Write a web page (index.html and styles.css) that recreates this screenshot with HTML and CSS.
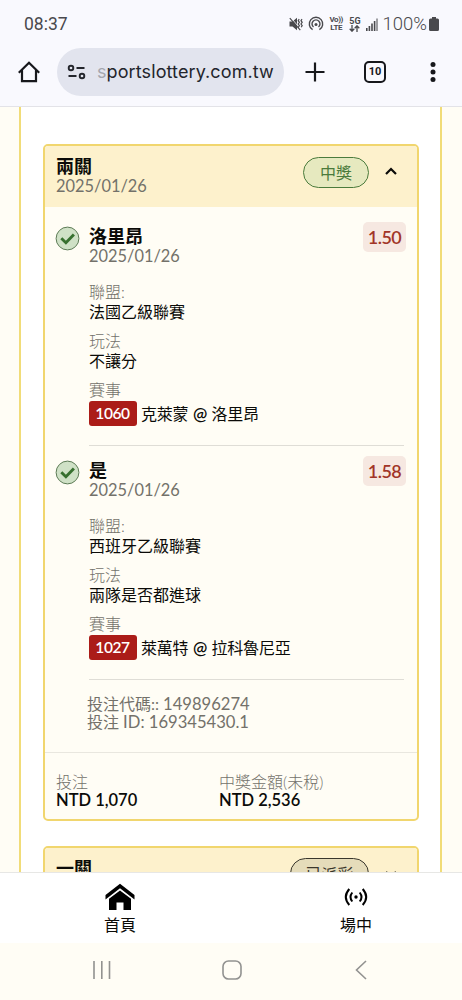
FILE: index.html
```html
<!DOCTYPE html>
<html lang="zh-Hant">
<head>
<meta charset="utf-8">
<meta name="viewport" content="width=device-width, initial-scale=1">
<title>投注紀錄</title>
<link rel="stylesheet" href="styles.css">
</head>
<body>
<header class="chrome">
  <div class="status">
    <span class="clock">08:37</span>
    <div class="indicators">
      <svg class="i-mute" width="14" height="14" viewBox="0 0 14 14"><path d="M.5 4.500h3L8 .8v12.400L3.500 9.500h-3z" fill="#49494d"/><path d="M1.800.8l10.500 12" stroke="#f9f9fe" stroke-width="1"/><path d="M.8 1.200l10.500 12M10.200 2.200l-1 1.500 1.200 1.600-1.200 1.700 1.200 1.600-1 1.600M13 2.200l-1 1.500 1.200 1.600L12 7l1.200 1.600-1 1.600" stroke="#49494d" stroke-width="1.200" fill="none"/></svg>
      <svg class="i-hot" width="16" height="16" viewBox="0 0 16 16" fill="none" stroke="#49494d" stroke-width="1.400"><path d="M4.600 13.700a6.700 6.700 0 1 1 6.800 0M5.500 11a4 4 0 1 1 5 0"/><circle cx="8" cy="8.500" r="1.500" fill="#49494d" stroke="none"/></svg>
      <div class="tiny volte"><span>Vo))</span><span>LTE</span></div>
      <div class="tiny fiveg"><span>5G</span><svg width="11" height="7" viewBox="0 0 11 7" fill="none" stroke="#49494d" stroke-width="1.300"><path d="M3 0v6M.7 3.800L3 6.200l2.300-2.400M8 7V1M5.700 3.200L8 .8l2.300 2.400"/></svg></div>
      <svg class="i-signal" width="12" height="13" viewBox="0 0 12 13" fill="#49494d"><path d="M0 10h1.600v3H0zM2.600 8h1.600v5H2.600zM5.200 5.500h1.600V13H5.200zM7.800 3h1.600v10H7.800z"/><path d="M10.200.5h1.600V13h-1.600z" opacity=".65"/></svg>
      <span class="pct">100%</span>
      <svg class="i-batt" width="10" height="14" viewBox="0 0 10 14"><path d="M3 0h4v1.500h1.500Q10 1.500 10 3v9.500Q10 14 8.500 14h-7Q0 14 0 12.500V3Q0 1.500 1.500 1.500H3z" fill="#49494d"/></svg>
    </div>
  </div>
  <div class="toolbar">
    <svg class="t-home" width="24" height="24" viewBox="0 0 24 24" fill="none" stroke="#17181c" stroke-width="2.200"><path d="M1.800 12.700L12 2.700l10.200 10M5 10v11.200h14V10"/></svg>
    <div class="omnibox">
      <svg width="20" height="16" viewBox="0 0 20 16" fill="none" stroke="#23252c" stroke-width="1.900"><circle cx="4" cy="4" r="2.300"/><path d="M9.500 4h8M1.500 12h8"/><circle cx="15" cy="12" r="2.300"/></svg>
      <span class="url"><span class="fade">s</span>portslottery.com.tw</span>
    </div>
    <svg class="t-plus" width="20" height="20" viewBox="0 0 20 20" stroke="#17181c" stroke-width="2.200"><path d="M10 .5v19M.5 10h19"/></svg>
    <span class="tabs">10</span>
    <svg class="t-more" width="6" height="20" viewBox="0 0 6 20" fill="#17181c"><circle cx="3" cy="2.500" r="2.500"/><circle cx="3" cy="10" r="2.500"/><circle cx="3" cy="17.500" r="2.500"/></svg>
  </div>
</header>

<main class="page">
  <div class="panel">
    <section class="card">
      <div class="card-head">
        <div class="head-text"><h2>兩關</h2><p class="date">2025/01/26</p></div>
        <span class="pill won">中獎</span>
        <svg class="chev" width="12" height="8" viewBox="0 0 12 8" fill="none" stroke="#0b0b08" stroke-width="2.200"><path d="M1 7l5-5 5 5"/></svg>
      </div>
      <div class="legs">
        <article class="leg">
          <svg class="check" width="25" height="25" viewBox="0 0 25 25"><circle cx="12.500" cy="12.500" r="11.400" fill="#cfe1c6" stroke="#5d7b56" stroke-width="1"/><path d="M6.300 12.200l4.600 4.500 8-8.300" fill="none" stroke="#37702f" stroke-width="2.900"/></svg>
          <div class="leg-body">
            <div class="leg-top"><div><h3>洛里昂</h3><p class="date">2025/01/26</p></div><span class="odds">1.50</span></div>
            <dl><dt>聯盟:</dt><dd>法國乙級聯賽</dd><dt>玩法</dt><dd>不讓分</dd><dt>賽事</dt><dd class="match"><b>1060</b>克萊蒙 <i>@</i> 洛里昂</dd></dl>
          </div>
        </article>
        <article class="leg">
          <svg class="check" width="25" height="25" viewBox="0 0 25 25"><circle cx="12.500" cy="12.500" r="11.400" fill="#cfe1c6" stroke="#5d7b56" stroke-width="1"/><path d="M6.300 12.200l4.600 4.500 8-8.300" fill="none" stroke="#37702f" stroke-width="2.900"/></svg>
          <div class="leg-body">
            <div class="leg-top"><div><h3>是</h3><p class="date">2025/01/26</p></div><span class="odds">1.58</span></div>
            <dl><dt>聯盟:</dt><dd>西班牙乙級聯賽</dd><dt>玩法</dt><dd>兩隊是否都進球</dd><dt>賽事</dt><dd class="match"><b>1027</b>萊萬特 <i>@</i> 拉科魯尼亞</dd></dl>
          </div>
        </article>
      </div>
      <div class="codes"><p>投注代碼:: <span class="num">149896274</span></p><p>投注 <span class="num">ID: 169345430.1</span></p></div>
      <div class="card-foot">
        <div class="stake"><p>投注</p><strong>NTD 1,070</strong></div>
        <div class="payout"><p>中獎金額(未稅)</p><strong>NTD 2,536</strong></div>
      </div>
    </section>
    <section class="card">
      <div class="card-head">
        <div class="head-text"><h2>一關</h2></div>
        <span class="pill settled">已派彩</span>
        <svg class="chev down" width="12" height="8" viewBox="0 0 12 8" fill="none" stroke="#0b0b08" stroke-width="2.200"><path d="M1 1l5 5 5-5"/></svg>
      </div>
    </section>
  </div>
</main>

<nav class="tabbar">
  <a class="tab"><svg width="30" height="28" viewBox="0 0 30 28"><path d="M.5 12L15 .8 29.500 12v4.500L15 5.300.5 16.500z"/><path d="M4 15.800L15 7.500l11 8.300V27h-7.500v-7.500h-7V27H4z"/></svg><span>首頁</span></a>
  <a class="tab"><svg width="24" height="28" viewBox="0 0 24 28" fill="none" stroke="#000" stroke-width="2"><circle cx="12" cy="14" r="1.700" fill="#000" stroke="none"/><path d="M8.300 9.500q-3.600 4.500 0 9M15.700 9.500q3.600 4.500 0 9M5.300 6q-7 8 0 16M18.700 6q7 8 0 16"/></svg><span>場中</span></a>
</nav>
<footer class="sysnav">
  <svg width="20" height="20" viewBox="0 0 20 20" stroke="#929290" stroke-width="1.600"><path d="M2 1v18M9.800 1v18M17.500 1v18"/></svg>
  <svg width="20" height="20" viewBox="0 0 20 20" fill="none" stroke="#929290" stroke-width="1.600"><rect x="1" y="1" width="18" height="18" rx="5.500"/></svg>
  <svg width="20" height="20" viewBox="0 0 20 20" fill="none" stroke="#929290" stroke-width="1.600"><path d="M15 1L5.500 10l9.500 9"/></svg>
</footer>
</body>
</html>
```
FILE: styles.css
```css
* { box-sizing: border-box; margin: 0; padding: 0; }
svg { display: block; flex: none; }
body {
  width: 462px; height: 1000px; overflow: hidden;
  display: flex; flex-direction: column;
  background: #fffdf5; color: #0b0b08;
  font: 16px/20px Lato, "Noto Sans CJK TC", sans-serif;
}
.chrome { height: 107px; flex: none; background: #f9f9fe; border-bottom: 1px solid #e3e3e8; }
.status { height: 48px; padding: 0 23px 0 24px; display: flex; align-items: center; justify-content: space-between; color: #49494d; }
.clock { font: 400 17.500px/20px Roboto, sans-serif; }
.indicators { display: flex; align-items: center; }
.i-hot { margin-left: 5px; }
.tiny { display: flex; flex-direction: column; align-items: center; font: 700 8px/8px Roboto, sans-serif; }
.volte { margin-left: 5px; width: 14px; letter-spacing: -0.4px; }
.fiveg { margin-left: 6px; }
.fiveg span { font-size: 9px; }
.i-signal { margin-left: 5px; }
.pct { font: 300 18.500px/20px Roboto, sans-serif; margin-left: 5px; }
.i-batt { margin-left: 2px; }
.toolbar { height: 48px; display: flex; align-items: center; padding-left: 17px; }
.omnibox { width: 227px; height: 48px; margin-left: 16px; padding-left: 10px; border-radius: 24px; background: #e2e4ee; display: flex; align-items: center; gap: 10px; }
.url { font: 400 18px/24px Inter, sans-serif; letter-spacing: 0.1px; color: #23252c; white-space: nowrap; }
.fade { color: #a4a6ae; }
.t-plus { margin-left: 21px; }
.tabs { width: 22px; height: 22px; margin-left: 39px; border: 2px solid #17181c; border-radius: 5px; font: 700 11px/18px Roboto, sans-serif; color: #17181c; text-align: center; }
.t-more { margin-left: 44px; }

.page { flex: 1; min-height: 0; overflow: hidden; padding: 0 20px 0 19px; }
.panel { background: #fff; border: solid #f1dc78; border-width: 0 2px; padding: 37px 21px 0 22px; height: 860px; }
.card { border: 2px solid #f1d66e; border-radius: 5px; overflow: hidden; background: #fffdf5; margin-bottom: 25px; }
.card-head { height: 61px; background: #fdf1cc; padding: 10px 20px 0 11px; display: flex; align-items: flex-start; }
.head-text { flex: 1; }
h2, h3 { font-size: 18px; font-weight: 700; line-height: 20px; }
.date { line-height: 18px; font-size: 16.400px; color: #73716a; }
.head-text .date { line-height: 20px; }
.pill { height: 31px; border-radius: 16px; border: 1px solid; font-size: 16px; line-height: 29px; text-align: center; }
.won { width: 66px; background: #e6e9bf; color: #4b7b3c; margin-top: 1px; }
.settled { width: 79px; background: #e5dcba; color: #39362c; }
.chev { margin: 11px 0 0 16px; }
.chev.down { margin-top: 13px; }
.legs { padding: 5px 12px 0 10px; }
.leg { display: flex; }
.check { margin-top: 14px; }
.leg-body { flex: 1; margin-left: 9px; padding: 14px 0 19px; border-bottom: 1px solid #dfddd6; margin-right: 1px; }
.leg-top { display: flex; justify-content: space-between; height: 56px; }
.leg-top h3 { line-height: 21px; }
.odds { width: 43px; height: 30px; margin: -4px -2px 0 0; border-radius: 5px; background: #f6e8e1; color: #a13528; font-size: 18px; letter-spacing: -0.5px; font-weight: 600; line-height: 30px; text-align: center; }
dt { color: #73716a; font-weight: 300; }
dd + dt { margin-top: 9px; }
.match { height: 25px; margin-top: 1px; display: flex; align-items: center; gap: 4.500px; line-height: 24px; letter-spacing: -0.2px; }
.match i { font-style: normal; font-weight: 600; font-size: 17px; }
.match b { width: 48px; height: 25px; border-radius: 3px; background: #ab1c18; color: #fff; font-size: 15.500px; font-weight: 600; line-height: 25px; text-align: center; letter-spacing: -0.4px; margin-left: -0.5px; }
.codes { padding: 15px 0 21px 42px; color: #73716a; line-height: 18px; border-bottom: 1px solid #e9e7df; }
.num { font-size: 16.600px; }
.card-foot { height: 66px; padding: 20px 11px 0; display: flex; line-height: 18px; }
.card-foot p { color: #73716a; font-weight: 300; }
.card-foot strong { display: block; font-weight: 600; font-size: 16.500px; line-height: 19px; }
.stake { width: 163px; }

.tabbar { height: 71px; flex: none; background: #fff; border-top: 1px solid #e7e7e5; display: flex; }
.tab { width: 50%; display: flex; flex-direction: column; align-items: center; padding: 10px 0 0 9px; }
.tab + .tab { padding-left: 19px; }
.tab span { margin-top: 4px; }
.sysnav { height: 57px; flex: none; display: flex; justify-content: space-between; padding: 17px 91px 0 92px; }
```
